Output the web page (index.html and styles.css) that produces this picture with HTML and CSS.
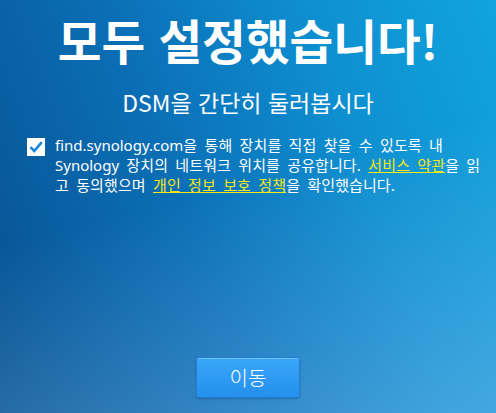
FILE: index.html
```html
<!DOCTYPE html>
<html lang="ko">
<head>
<meta charset="utf-8">
<link rel="stylesheet" href="styles.css">
</head>
<body>
<div class="page">
  <h1 class="title">모두 설정했습니다!</h1>
  <h2 class="subtitle">DSM을 간단히 둘러봅시다</h2>
  <div class="agree">
    <span class="check">
      <svg width="18" height="18" viewBox="0 0 18 18"><rect x="0" y="0" width="18" height="18" fill="#fff"/><path d="M3.5 9.2 L7.2 13 L14.8 4.2" fill="none" stroke="#1a86d8" stroke-width="2.6"/></svg>
    </span>
    <p class="agree-text"><span class="lat">find.synology.com</span>을 통해 장치를 직접 찾을 수 있도록 내 <span class="lat">Synology</span> 장치의 네트워크 위치를 공유합니다. <a class="link">서비스 약관</a>을 읽<wbr>고 동의했으며 <a class="link">개인 정보 보호 정책</a>을 확인했습니다.</p>
  </div>
  <div class="spacer"></div>
  <div class="actions">
    <button class="btn">이동</button>
  </div>
</div>
</body>
</html>
```
FILE: styles.css
```css
html, body {
  margin: 0;
  padding: 0;
  width: 496px;
  height: 413px;
  overflow: hidden;
}
body {
  font-family: "Noto Sans CJK KR", "Noto Sans", sans-serif;
  color: #fff;
  background:
    linear-gradient(165deg, rgba(140,195,240,0) 45%, rgba(140,195,240,0.42) 100%),
    linear-gradient(70deg, #07508f 0%, #0b6fb6 40%, #0e8fd0 70%, #10a4de 100%);
}
.page {
  height: 413px;
  display: flex;
  flex-direction: column;
  align-items: center;
}
.title {
  margin: 10px 0 0;
  font-size: 47.5px;
  font-weight: 700;
  line-height: 60px;
}
.subtitle {
  margin: 17px 0 0;
  font-size: 23px;
  font-weight: 400;
  line-height: 30px;
}
.agree {
  align-self: stretch;
  display: flex;
  align-items: flex-start;
  gap: 10px;
  padding: 0 5px 0 27px;
  margin-top: 18px;
}
.check {
  flex: none;
  width: 18px;
  height: 18px;
  margin-top: 3px;
  display: block;
}
.check svg { display: block; }
.agree-text {
  margin: 0;
  font-size: 15px;
  line-height: 20px;
  letter-spacing: 0.1px;
  word-spacing: 3px;
}
.lat {
  font-family: "Noto Sans", sans-serif;
  font-size: 15px;
  letter-spacing: 0;
}
.link {
  color: #f5e61a;
  text-decoration: underline;
}
.spacer { flex: 1; }
.actions {
  margin-bottom: 15px;
}
.btn {
  width: 104px;
  height: 41px;
  border: 1px solid #1f7fd4;
  border-radius: 3px;
  background: linear-gradient(#3aa6f8, #2590ee);
  color: #fff;
  font-family: "Noto Sans CJK KR", sans-serif;
  font-size: 20px;
  font-weight: 300;
  box-shadow: 0 1px 2px rgba(0,40,100,0.3), inset 0 1px 0 rgba(255,255,255,0.3);
}
```
